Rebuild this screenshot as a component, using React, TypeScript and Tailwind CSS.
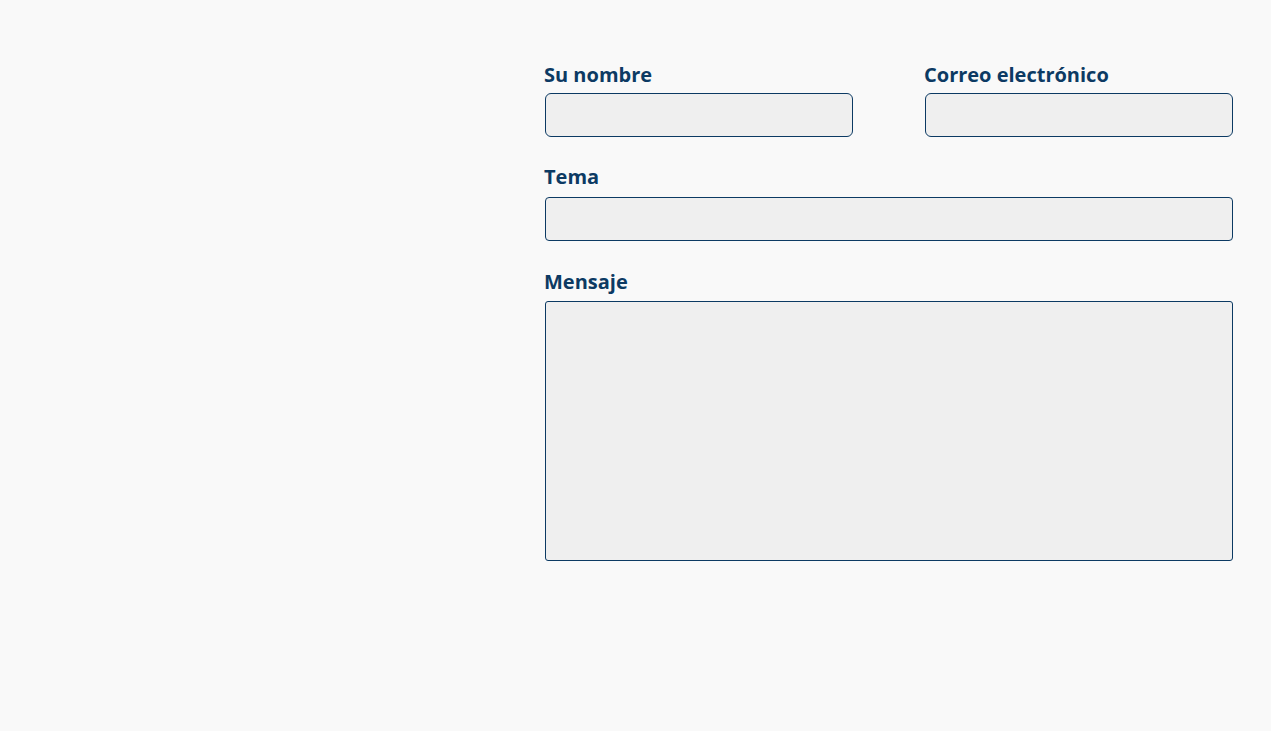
import React from "react";

const labelBase =
  "block -ml-px text-[20px] leading-[28px] font-bold text-[#0c3a63]";
const inputCls =
  "block w-full h-[44px] bg-[#efefef] border border-[#0c3a63] rounded-[6px] outline-none px-3 text-[16px]";

export default function App() {
  return (
    <div
      className="min-h-[731px] w-full bg-[#f9f9f9]"
      style={{ fontFamily: '"Open Sans", "Noto Sans", sans-serif' }}
    >
      <form className="ml-[545px] w-[688px] pt-[61px] flex flex-col">
        <div className="grid grid-cols-2 gap-x-[72px]">
          <div>
            <label className={labelBase + " mb-[4px]"}>Su nombre</label>
            <input className={inputCls} type="text" />
          </div>
          <div>
            <label className={labelBase + " mb-[4px]"}>Correo electrónico</label>
            <input className={inputCls} type="email" />
          </div>
        </div>
        <div className="mt-[26px]">
          <label className={labelBase + " mb-[6px]"}>Tema</label>
          <input
            className="block w-full h-[44px] bg-[#efefef] border border-[#0c3a63] rounded-[4px] outline-none px-3 text-[16px]"
            type="text"
          />
        </div>
        <div className="mt-[27px]">
          <label className={labelBase + " mb-[5px]"}>Mensaje</label>
          <textarea className="block w-full h-[260px] bg-[#efefef] border border-[#0c3a63] rounded-[3px] outline-none p-3 text-[16px] resize-none" />
        </div>
      </form>
    </div>
  );
}
